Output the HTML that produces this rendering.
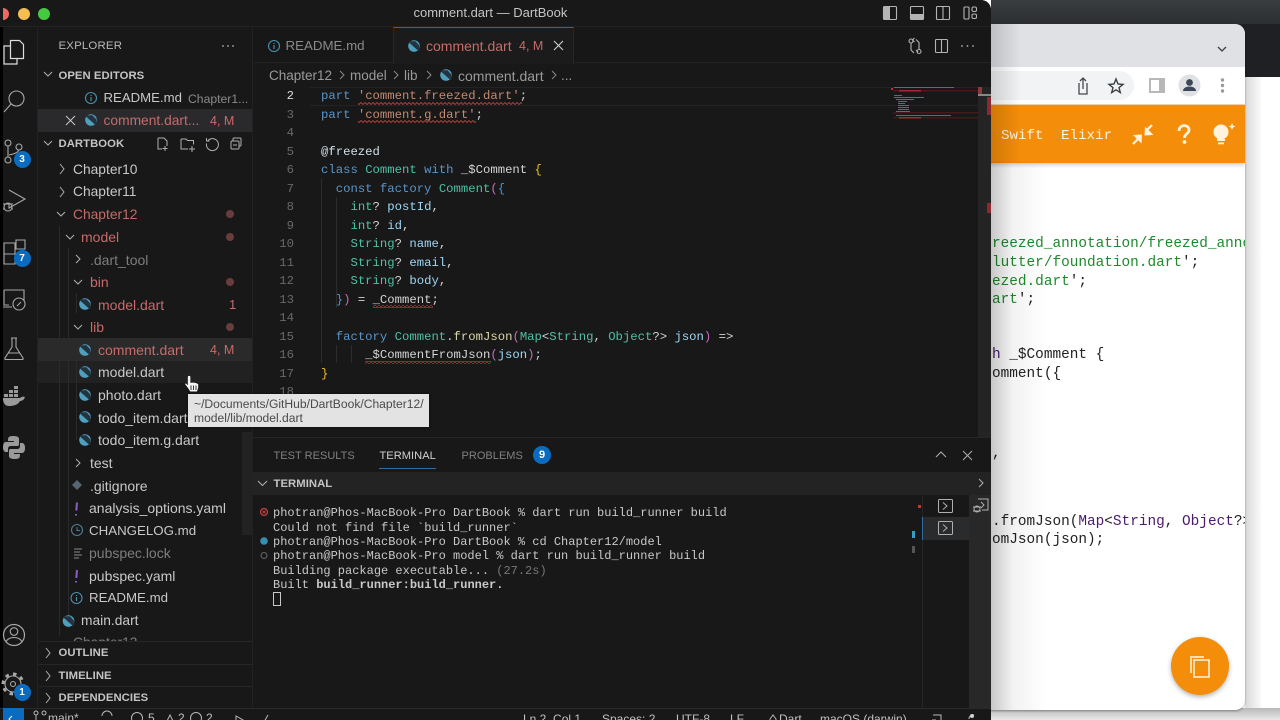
<!DOCTYPE html>
<html><head><meta charset="utf-8"><style>
html,body{margin:0;padding:0;width:1280px;height:720px;overflow:hidden;background:#fff}
div,span.a{position:absolute}
#r{position:relative;width:1280px;height:720px;overflow:hidden;font-family:"Liberation Sans",sans-serif}
.t{position:absolute;white-space:nowrap;line-height:20px;height:20px;font-size:14px;color:#c8c8c8;margin-top:1px}
.d{color:#c76a6a}.g{color:#7d7d7d}
.h{font-weight:bold;font-size:11.3px;color:#c4c4c4;letter-spacing:.05px}
.c{position:absolute;left:321px;white-space:pre;font:12.27px/18px "Liberation Mono",monospace;color:#d4d4d4;height:18px;margin-top:.5px}
.n{position:absolute;width:40px;left:254px;text-align:right;font:12.27px/18px "Liberation Mono",monospace;color:#686868;margin-top:.5px}
.k{color:#5a94c8}.y{color:#4ec0a4}.s{color:#c48a72}.v{color:#9fd6f5}.f{color:#d8d8a8}.b{color:#e8c020}.p{color:#c66cc0}.l{color:#3f97e0}
.u{position:absolute;left:273px;white-space:pre;font:12px/14px "Liberation Mono",monospace;color:#c8c8c8;margin-top:1px}
.w{position:absolute;left:992px;white-space:pre;font:14.4px/18px "Liberation Mono",monospace;color:#222;margin-top:2px}
.gr{color:#1f8a2d}.pu{color:#4b1a6d}
svg{position:absolute;overflow:visible}
.ic{fill:none;stroke:#a8a8a8;stroke-width:1.1}
.ib{position:absolute;width:17px;height:17px;border-radius:50%;background:#0a6cc0;color:#fff;font:bold 10px/17px "Liberation Sans",sans-serif;text-align:center}
.dot{position:absolute;width:8px;height:8px;border-radius:50%;background:#6a3d3d;left:226px}
</style></head><body><div id="r">

<!-- right backdrop -->
<div style="left:991px;top:0;width:289px;height:24px;background:linear-gradient(#3a3d40,#2c2e31)"></div>
<div style="left:991px;top:24px;width:289px;height:53px;background:#1e2023"></div>
<div style="left:1245px;top:77px;width:35px;height:643px;background:linear-gradient(90deg,#d8d8d8,#fff 18px)"></div>
<div style="left:991px;top:708px;width:289px;height:12px;background:linear-gradient(#b8b8b8,#e8e8e8)"></div>

<!-- browser -->
<div style="left:940px;top:24px;width:305px;height:686px;border-radius:10px;background:#fff;overflow:hidden;box-shadow:0 1px 2px rgba(0,0,0,.35)">
 <div style="left:0;top:0;width:305px;height:43px;background:#dfe1e5"></div>
 <div style="left:0;top:43px;width:194px;height:37px;background:#fff"></div>
 <div style="left:0;top:47px;width:194px;height:29px;background:#f1f3f4;border-radius:0 15px 15px 0"></div>
 <div style="left:0;top:80px;width:305px;height:2px;background:#f6d6a8"></div>
 <div style="left:0;top:81px;width:305px;height:58px;background:#f48d0a;box-shadow:0 2px 4px rgba(0,0,0,.2)"></div>
 <div style="left:61px;top:102px;font:14.2px/20px 'Liberation Mono',monospace;color:#fff3dd;white-space:nowrap">Swift</div>
 <div style="left:121px;top:102px;font:14.2px/20px 'Liberation Mono',monospace;color:#fff3dd;white-space:nowrap">Elixir</div>
</div>
<svg style="left:0;top:0" width="1280" height="720">
 <path d="M1218 47l4 4 4-4" fill="none" stroke="#3c4043" stroke-width="1.3"/>
 <path d="M1079 83v11h8V83M1083 89V79M1080 81l3-3 3 3" fill="none" stroke="#45484c" stroke-width="1.3"/>
 <path d="M1116 79l2 5 5 .4-4 3.2 1.3 5-4.3-2.8-4.3 2.8 1.3-5-4-3.2 5-.4z" fill="none" stroke="#3c4043" stroke-width="1.4"/>
 <rect x="1150" y="79" width="14" height="13" fill="#fff" stroke="#b8b8b8" stroke-width="2"/><rect x="1159" y="79" width="5" height="13" fill="#b8b8b8"/>
 <circle cx="1189.5" cy="85.5" r="11" fill="#dfe1e5"/><circle cx="1189.5" cy="82.5" r="3.4" fill="#3c4858"/><path d="M1183 91c0-6 13-6 13 0z" fill="#3c4858"/>
 <g fill="#9a9a9a"><circle cx="1222.5" cy="80" r="1.7"/><circle cx="1222.5" cy="85.5" r="1.7"/><circle cx="1222.5" cy="91" r="1.7"/></g>
 <g stroke="#fff3dd" stroke-width="2.2" fill="none"><path d="M1133 144l6-6M1152 125l-6 6"/></g>
 <path d="M1142 134.500l-9 .5 8.500 8.500zM1144.500 135.500l.5-9 8.500 8.500z" fill="#fff3dd"/>
 <path d="M1179 131c0-7 10-7 10-1 0 4-4.500 3.500-4.500 8" fill="none" stroke="#fff3dd" stroke-width="2.8"/><circle cx="1184.5" cy="142" r="1.9" fill="#fff3dd"/>
 <circle cx="1221" cy="132" r="7.5" fill="#fff3dd"/><rect x="1217" y="139" width="8" height="2" fill="#fff3dd"/><rect x="1218" y="142.5" width="6" height="1.8" fill="#fff3dd"/>
 <path d="M1232 123l1 2.5 2.5 1-2.500 1-1 2.500-1-2.500-2.500-1 2.500-1z" fill="#fff3dd"/>
</svg>
<!-- browser code -->
<div style="left:991px;top:165px;width:254px;height:400px;overflow:hidden">
 <div class="w gr" style="left:1px;top:68px">reezed_annotation/freezed_annotation</div>
 <div class="w" style="left:1px;top:87px"><span class="gr">lutter/foundation.dart</span>';</div>
 <div class="w" style="left:1px;top:106px"><span class="gr">ezed.dart</span>';</div>
 <div class="w" style="left:1px;top:124px"><span class="gr">art</span>';</div>
 <div class="w" style="left:1px;top:179px"><span class="pu">h</span> _$Comment {</div>
 <div class="w" style="left:1px;top:198px">omment({</div>
 <div class="w" style="left:1px;top:278px">,</div>
 <div class="w" style="left:1px;top:346px">.fromJson(<span class="pu">Map</span>&lt;<span class="pu">String</span>, <span class="pu">Object</span>?&gt;</div>
 <div class="w" style="left:1px;top:364px">omJson(json);</div>
</div>
<div style="left:991px;top:162px;width:60px;height:548px;background:linear-gradient(90deg,rgba(0,0,0,.22),rgba(0,0,0,.05) 22px,rgba(0,0,0,0) 55px)"></div>
<div style="left:991px;top:24px;width:30px;height:138px;background:linear-gradient(90deg,rgba(0,0,0,.15),rgba(0,0,0,0))"></div>
<div style="left:1171px;top:637px;width:58px;height:58px;border-radius:50%;background:#f48d0a;box-shadow:0 2px 5px rgba(0,0,0,.3)"></div>
<svg style="left:0;top:0" width="1280" height="720"><g fill="none" stroke="#ffe9c4" stroke-width="1.7"><rect x="1194" y="660" width="15" height="17"/><path d="M1191 673v-16h13"/></g></svg>

<!-- VS Code window -->
<div style="left:0;top:0;width:991px;height:720px;background:#181818;border-radius:0 10px 0 0;overflow:hidden">
 <div style="left:0;top:0;width:3px;height:720px;background:#000"></div>
 <div style="left:0;top:0;width:991px;height:27px;background:#181818;border-bottom:1px solid #222;box-sizing:border-box"></div>
 <div style="left:37px;top:27px;width:1px;height:681px;background:#222"></div>
 <div style="left:252px;top:27px;width:1px;height:681px;background:#222"></div>
 <div style="left:253px;top:27px;width:738px;height:36px;background:#171717;border-bottom:1px solid #222;box-sizing:border-box"></div>
 <div style="left:393px;top:27px;width:181px;height:37px;background:#1b1b1b;border-top:1px solid #1f6aa8;border-left:1px solid #262626;border-right:1px solid #262626;box-sizing:border-box"></div>
 <!-- editor current line -->
 <div style="left:310px;top:87px;width:668px;height:17px;border-top:1px solid #232323;border-bottom:1px solid #232323"></div>
 <!-- minimap -->
 <svg style="left:0;top:0" width="991" height="440">
  <rect x="891" y="88" width="2" height="2" fill="#c03030"/>
  <g fill="#4a161c"><rect x="893" y="90" width="85" height="1.500"/><rect x="893" y="112" width="85" height="1.500"/><rect x="893" y="117" width="85" height="1.500"/></g>
  <g fill="#a82832"><rect x="899" y="90" width="22" height="1.500"/><rect x="899" y="117" width="22" height="1.500"/></g>
  <g fill="#56706f"><rect x="894" y="87" width="60" height="1"/><rect x="894" y="95" width="8" height="1"/><rect x="894" y="97" width="30" height="1"/><rect x="896" y="99" width="18" height="1"/><rect x="898" y="101" width="9" height="1"/><rect x="898" y="103" width="7" height="1"/><rect x="898" y="105" width="11" height="1"/><rect x="898" y="107" width="11" height="1"/><rect x="898" y="109" width="11" height="1"/><rect x="896" y="111" width="14" height="1"/><rect x="896" y="115" width="55" height="1"/></g>
  <rect x="978" y="87" width="13" height="350" fill="#242424"/>
  <rect x="978" y="87" width="4" height="7" fill="#8a3a3f"/>
  <rect x="978" y="94" width="13" height="2" fill="#888"/>
  <rect x="987" y="97" width="4" height="18" fill="#8a2a30"/>
  <rect x="987" y="203" width="4" height="10" fill="#8a2a30"/>
 </svg>
 <!-- panel -->
 <div style="left:253px;top:437px;width:738px;height:1px;background:#262626"></div>
 <div style="left:253px;top:472px;width:738px;height:23px;background:#232323"></div>
 <div style="left:969px;top:495px;width:22px;height:213px;background:#282828"></div>
 <div style="left:922px;top:495px;width:1px;height:213px;background:#262626"></div>
 <div style="left:923px;top:517px;width:46px;height:23px;background:#2a2b2d"></div>
 <div style="left:922px;top:517px;width:1px;height:23px;background:#2f6ea5"></div>
 <div style="left:379px;top:468px;width:57px;height:1px;background:#2a6ea8"></div>
 <div style="left:912px;top:531px;width:3px;height:7px;background:#3a9bc4"></div>
 <div style="left:912px;top:546px;width:3px;height:7px;background:#555"></div>
 <div style="left:918px;top:505px;width:3px;height:3px;background:#c03a3a"></div>
 <!-- sidebar highlights -->
 <div style="left:38px;top:109px;width:214px;height:23px;background:#2a2a2c"></div>
 <div style="left:38px;top:338px;width:214px;height:23px;background:#2a2a2b"></div>
 <div style="left:38px;top:361px;width:214px;height:22px;background:#212121"></div>
 <div style="left:242px;top:432px;width:10px;height:103px;background:#222"></div>
 <div style="left:38px;top:641px;width:214px;height:1px;background:#262626"></div>
 <div style="left:38px;top:664px;width:214px;height:1px;background:#262626"></div>
 <div style="left:38px;top:686px;width:214px;height:1px;background:#262626"></div>
 <!-- status bar -->
 <div style="left:0;top:708px;width:991px;height:12px;background:#181818;border-top:1px solid #2a2a2a;box-sizing:border-box"></div>
 <div style="left:3px;top:708px;width:21px;height:12px;background:#0a6cc0"></div>
 <div class="t" style="left:48px;top:707px;font-size:12px;color:#c0c0c0">main*</div>
 <div class="t" style="left:148px;top:707px;font-size:12px;color:#c0c0c0">5</div>
 <div class="t" style="left:178px;top:707px;font-size:12px;color:#c0c0c0">2</div>
 <div class="t" style="left:206px;top:707px;font-size:12px;color:#c0c0c0">2</div>
 <div class="t" style="left:523px;top:708px;font-size:12px;color:#c0c0c0">Ln 2, Col 1</div>
 <div class="t" style="left:602px;top:708px;font-size:12px;color:#c0c0c0">Spaces: 2</div>
 <div class="t" style="left:676px;top:708px;font-size:12px;color:#c0c0c0">UTF-8</div>
 <div class="t" style="left:730px;top:708px;font-size:12px;color:#c0c0c0">LF</div>
 <div class="t" style="left:779px;top:708px;font-size:12px;color:#c0c0c0">Dart</div>
 <div class="t" style="left:820px;top:708px;font-size:12px;color:#c0c0c0">macOS (darwin)</div>
</div>
<div style="left:3px;top:3px;width:6px;height:22px;overflow:hidden"><div style="left:-6px;top:5px;width:12px;height:12px;border-radius:50%;background:#ec6a5e"></div></div>
<div style="left:17.5px;top:8px;width:12px;height:12px;border-radius:50%;background:#f4bf4f"></div>
<div style="left:38px;top:8px;width:12px;height:12px;border-radius:50%;background:#45c93f"></div>

<div class="t" style="left:413.500px;top:2px;font-size:13px;color:#c4c4c4">comment.dart — DartBook</div>

<svg width="0" height="0"><defs><g id="da"><circle cx="6" cy="6" r="5.8" fill="#4f9fbf"/><path d="M1.500 1.200h6l3.800 4.300v5.500h-.8L1.500 3z" fill="#23343f"/></g></defs></svg>

<!-- Title bar layout icons -->
<svg style="left:0;top:0" width="991" height="64">
 <g fill="none" stroke="#b4b4b4" stroke-width="1.1">
  <rect x="883.5" y="6.5" width="13" height="13" rx="1"/><rect x="910.5" y="6.5" width="13" height="13" rx="1"/><rect x="936.5" y="6.5" width="13" height="13" rx="1"/><path d="M943 6.500v13"/>
  <rect x="964" y="7" width="5" height="12" rx="1"/><rect x="972" y="7" width="4.5" height="4.5" rx="1.5"/><rect x="972" y="14" width="4.5" height="4.5" rx="1.5"/>
  <rect x="935.5" y="39.5" width="12" height="13" rx="1"/><path d="M941.500 39.500v13"/>
  <circle cx="911" cy="41" r="2"/><circle cx="919" cy="51.5" r="2"/><path d="M911 43v7l3 3M919 49.500v-7l-3-3M914.500 38l-2 2 2 2M916 50l2 2"/>
  <path d="M554 41l9 9M563 41l-9 9" stroke="#d0d0d0"/>
 </g>
 <rect x="884" y="7" width="6" height="12" fill="#b4b4b4"/><rect x="911" y="14" width="12" height="5.5" fill="#b4b4b4"/>
 <g fill="#b0b0b0"><circle cx="962" cy="46" r=".9"/><circle cx="967.5" cy="46" r=".9"/><circle cx="973" cy="46" r=".9"/><circle cx="223" cy="46" r=".9"/><circle cx="228" cy="46" r=".9"/><circle cx="233" cy="46" r=".9"/></g>
</svg>

<!-- tabs -->
<svg style="left:268px;top:40px" width="12" height="12"><circle cx="6" cy="6" r="5.5" fill="none" stroke="#4a8fae" stroke-width="1.1"/><path d="M6 5v4M6 3v1" stroke="#4a8fae" stroke-width="1.2"/></svg>
<div class="t" style="left:285.5px;top:35px;color:#8a8a8a;font-size:13.300px">README.md</div>
<svg style="left:408px;top:40px" width="12" height="12"><use href="#da"/></svg>
<div class="t d" style="left:426px;top:35px">comment.dart</div>
<div class="t d" style="left:519px;top:35px;font-size:12.5px">4, M</div>

<!-- breadcrumb -->
<div class="t" style="left:269px;top:64.5px;color:#9a9a9a;font-size:13.500px">Chapter12</div>
<div class="t" style="left:350px;top:64.5px;color:#9a9a9a;font-size:13.500px">model</div>
<div class="t" style="left:404px;top:64.5px;color:#9a9a9a;font-size:13.500px">lib</div>
<svg style="left:440px;top:69px" width="12" height="12"><use href="#da"/></svg>
<div class="t" style="left:458px;top:64.5px;color:#9a9a9a">comment.dart</div>
<div class="t" style="left:561px;top:64.5px;color:#9a9a9a;font-size:13.500px">...</div>
<svg style="left:0;top:0" width="600" height="90"><g fill="none" stroke="#8a8a8a" stroke-width="1"><path d="M340 71l4 4-4 4M394 71l4 4-4 4M427 71l4 4-4 4M552 71l4 4-4 4"/></g></svg>

<!-- line numbers -->
<div class="n" style="top:86px;color:#dcdcdc">2</div><div class="n" style="top:105px">3</div><div class="n" style="top:123px">4</div><div class="n" style="top:142px">5</div><div class="n" style="top:160px">6</div><div class="n" style="top:179px">7</div><div class="n" style="top:197px">8</div><div class="n" style="top:216px">9</div><div class="n" style="top:234px">10</div><div class="n" style="top:253px">11</div><div class="n" style="top:271px">12</div><div class="n" style="top:290px">13</div><div class="n" style="top:308px">14</div><div class="n" style="top:327px">15</div><div class="n" style="top:345px">16</div><div class="n" style="top:364px">17</div><div class="n" style="top:382px">18</div>

<!-- code -->
<div class="c" style="top:86px"><span class="k">part</span> <span class="s">'comment.freezed.dart'</span>;</div>
<div class="c" style="top:105px"><span class="k">part</span> <span class="s">'comment.g.dart'</span>;</div>
<div class="c" style="top:142px"><span style="color:#cfe0e8">@freezed</span></div>
<div class="c" style="top:160px"><span class="k">class</span> <span class="y">Comment</span> <span class="k">with</span> _$Comment <span class="b">{</span></div>
<div class="c" style="top:179px">  <span class="k">const factory</span> <span class="y">Comment</span><span class="p">(</span><span class="l">{</span></div>
<div class="c" style="top:197px">    <span class="y">int</span>? <span class="v">postId</span>,</div>
<div class="c" style="top:216px">    <span class="y">int</span>? <span class="v">id</span>,</div>
<div class="c" style="top:234px">    <span class="y">String</span>? <span class="v">name</span>,</div>
<div class="c" style="top:253px">    <span class="y">String</span>? <span class="v">email</span>,</div>
<div class="c" style="top:271px">    <span class="y">String</span>? <span class="v">body</span>,</div>
<div class="c" style="top:290px">  <span class="l">}</span><span class="p">)</span> = _Comment;</div>
<div class="c" style="top:327px">  <span class="k">factory</span> <span class="y">Comment</span>.<span class="f">fromJson</span><span class="p">(</span><span class="y">Map</span>&lt;<span class="y">String</span>, <span class="y">Object</span>?&gt; <span class="v">json</span><span class="p">)</span> =&gt;</div>
<div class="c" style="top:345px">      <span style="color:#d4d4d4">_$CommentFromJson</span><span class="p">(</span><span class="v">json</span><span class="p">)</span>;</div>
<div class="c b" style="top:364px">}</div>

<svg style="left:0;top:0" width="991" height="440">
 <defs><pattern id="sq" width="4" height="3" patternUnits="userSpaceOnUse"><path d="M0 1.500L1 .5 3 2.500 4 1.500" fill="none" stroke="#b84040" stroke-width=".9"/></pattern></defs>
 <rect x="358" y="102" width="164" height="3" fill="url(#sq)"/>
 <rect x="358" y="120" width="118" height="3" fill="url(#sq)"/>
 <rect x="373" y="305" width="60" height="3" fill="url(#sq)"/>
 <rect x="365" y="361" width="126" height="3" fill="url(#sq)"/>
 <g stroke="#2c2c2c" stroke-width="1"><path d="M321.500 178v185M336.500 197v111M336.500 345v18M351.500 345v18"/></g>
</svg>

<!-- sidebar -->
<div class="t" style="left:58.5px;top:35px;font-size:11.4px;color:#b8b8b8;letter-spacing:.2px">EXPLORER</div>
<div class="t h" style="left:58.5px;top:64.500px">OPEN EDITORS</div>
<svg style="left:85px;top:92px" width="12" height="12"><circle cx="6" cy="6" r="5.5" fill="none" stroke="#4a8fae" stroke-width="1.1"/><path d="M6 5v4M6 3v1" stroke="#4a8fae" stroke-width="1.2"/></svg>
<div class="t" style="left:103.5px;top:87px;font-size:13.2px">README.md</div>
<div class="t" style="left:188px;top:87.5px;font-size:12.2px;color:#8a8a8a">Chapter1...</div>
<svg style="left:85px;top:114px" width="12" height="12"><use href="#da"/></svg>
<div class="t d" style="left:103.5px;top:110px;font-size:13.800px">comment.dart...</div>
<div class="t d" style="left:210px;top:110px;font-size:12.5px">4, M</div>
<div class="t h" style="left:58.5px;top:133px">DARTBOOK</div>

<div class="t" style="left:73px;top:158.500px;font-size:13.800px">Chapter10</div>
<div class="t" style="left:73px;top:181px;font-size:13.800px">Chapter11</div>
<div class="t d" style="left:73px;top:203.500px;font-size:13.800px">Chapter12</div>
<div class="t d" style="left:81px;top:226px">model</div>
<div class="t g" style="left:90px;top:248.500px">.dart_tool</div>
<div class="t d" style="left:90px;top:271px">bin</div>
<div class="t d" style="left:98px;top:293.500px">model.dart</div>
<div class="t d" style="left:229px;top:293.500px;font-size:13px">1</div>
<div class="t d" style="left:90px;top:316px">lib</div>
<div class="t d" style="left:98px;top:339px">comment.dart</div>
<div class="t d" style="left:210px;top:339px;font-size:12.5px">4, M</div>
<div class="t" style="left:98px;top:361px">model.dart</div>
<div class="t" style="left:98px;top:384px">photo.dart</div>
<div class="t" style="left:98px;top:406.500px">todo_item.dart</div>
<div class="t" style="left:98px;top:429px">todo_item.g.dart</div>
<div class="t" style="left:90px;top:452px">test</div>
<div class="t" style="left:90px;top:474.500px">.gitignore</div>
<div class="t" style="left:89px;top:497px">analysis_options.yaml</div>
<div class="t" style="left:89px;top:519.500px;font-size:13.300px">CHANGELOG.md</div>
<div class="t g" style="left:89px;top:542px">pubspec.lock</div>
<div class="t" style="left:89px;top:564.500px">pubspec.yaml</div>
<div class="t" style="left:89px;top:587px;font-size:13.300px">README.md</div>
<div class="t" style="left:81px;top:610px;font-size:13.800px">main.dart</div>
<div style="left:73px;top:637px;width:70px;height:4px;overflow:hidden"><div class="t g" style="left:0;top:-5px;font-size:13.800px">Chapter13</div></div>
<div class="t h" style="left:58.5px;top:642px">OUTLINE</div>
<div class="t h" style="left:58.5px;top:665px">TIMELINE</div>
<div class="t h" style="left:58.5px;top:687px">DEPENDENCIES</div>

<div class="dot" style="top:210px"></div><div class="dot" style="top:233px"></div><div class="dot" style="top:278px"></div><div class="dot" style="top:323px"></div>

<svg style="left:0;top:0" width="252" height="720">
 <g fill="none" stroke="#b0b0b0" stroke-width="1">
  <path d="M44 72l4 4 4-4M44 141l4 4 4-4"/>
  <path d="M60 164l4 5-4 5M60 187l4 5-4 5M57 212l4 4 4-4M66 235l4 4 4-4M76 255l4 4-4 4M74 280l4 4 4-4M74 325l4 4 4-4M76 459l4 4-4 4M46 648l4 5-4 5M46 671l4 5-4 5M46 693l4 5-4 5"/>
  <path d="M66 116l9 9M75 116l-9 9" stroke="#c8c8c8"/>
  <path d="M158 138h6l3 3v5M158 138v11h4M165 146v5M162.500 148.500h5"/>
  <path d="M181 139h5l1.500 1.500h6v4M181 139v10h7M192 146v6M189 149h6"/>
  <path d="M208 140.500a6 6 0 1 1-1.500 3M206.500 138v3h3"/>
  <rect x="233" y="138" width="8" height="8" rx="1"/><rect x="231" y="141" width="8" height="8" rx="1" fill="#181818"/><path d="M233 145h4"/>
 </g>
 <g stroke="#2a2a2a"><path d="M59.500 226v410M68.500 248v380M76.500 293v20M76.500 338v102"/></g>
 <use href="#da" x="79" y="298"/><use href="#da" x="79" y="344"/><use href="#da" x="79" y="366"/><use href="#da" x="79" y="389"/><use href="#da" x="79" y="411"/><use href="#da" x="79" y="434"/><use href="#da" x="62.500" y="615"/>
 <path d="M72 485l5-5 5 5-5 5z" fill="#54666f"/>
 <circle cx="77" cy="530" r="5.5" fill="none" stroke="#4a7f8f" stroke-width="1.1"/><path d="M77 527v3.500h3" fill="none" stroke="#4a7f8f"/>
 <circle cx="76.5" cy="598" r="5.5" fill="none" stroke="#4a8fae" stroke-width="1.1"/><path d="M76.500 597v4M76.500 595v1" stroke="#4a8fae" stroke-width="1.2"/>
 <path d="M74 549h8M74 552h6M74 555h8M74 558h5" stroke="#8a8a8a" stroke-width="1"/>
 <path d="M77 502.500l-.7 8M76 514v1.500M77 570l-.7 8M76 581v1.500" stroke="#8a5fc0" stroke-width="2"/>

 <!-- activity bar -->
 <g class="ic">
  <path d="M10.500 42v-1.500h9l4 4v14h-13zM10.500 46H4v18h13v-5" stroke="#dcdcdc" stroke-width="1.2"/>
  <circle cx="16.5" cy="98.5" r="7.5"/><path d="M11 104l-7 8"/>
  <circle cx="8" cy="143" r="3"/><circle cx="19" cy="147" r="3"/><circle cx="8" cy="160" r="3"/><path d="M8 146v11M9 155c6-1 9-3 10-5"/>
  <path d="M9 190l16 9-16 9v-5"/><circle cx="8" cy="207" r="4"/><path d="M3 204h10M3 209h2M11 209h2"/>
  <path d="M4 243h11v11h-11zM4 254h11v10H4zM15 254h8v-3M16 240h9v9h-9z"/>
  <path d="M4 290h20v11M4 290v15h5M3 307h9"/><circle cx="19" cy="304" r="6"/><path d="M17 306l4-4"/>
  <path d="M11 338h6M12 338v9l-7 11c-.5 1 0 1.500 1 1.500h16c1 0 1.500-.5 1-1.500l-7-11v-9M8 353h12"/>
  <circle cx="14" cy="635" r="10.500" stroke-width="1.2"/><circle cx="14" cy="631.500" r="3.800"/><path d="M6 642c2-6 14-6 16 0"/>
  <circle cx="13" cy="684" r="2.500"/><circle cx="13" cy="684" r="8"/><circle cx="13" cy="684" r="10" stroke-dasharray="3.500 4.300" stroke-width="3"/>
 </g>
 <g fill="#9a9a9a">
  <rect x="4" y="394" width="4" height="3"/><rect x="9" y="394" width="4" height="3"/><rect x="14" y="394" width="4" height="3"/><rect x="9" y="390" width="4" height="3"/><rect x="14" y="390" width="4" height="3"/><rect x="14" y="386" width="4" height="3"/>
  <path d="M3 398h17c1-1 3-2 5-1-1 3-3 4-5 4-2 4-7 5-11 5-4 0-6-3-6-8z"/>
  <path d="M13 436c-5 0-5 2-5 5h6v1H6c-2 0-3 2-3 5s1 5 3 5h2v-3c0-2 1-3 3-3h6c2 0 2-1 2-3v-4c0-2-2-3-6-3z"/>
  <path d="M15 459c5 0 5-2 5-5h-6v-1h8c2 0 3-2 3-5s-1-5-3-5h-2v3c0 2-1 3-3 3h-6c-2 0-2 1-2 3v4c0 2 2 3 6 3z"/>
 </g>
</svg>
<div class="ib" style="left:13.5px;top:151px">3</div>
<div class="ib" style="left:13.5px;top:249.5px">7</div>
<div class="ib" style="left:13.5px;top:683.5px">1</div>

<!-- panel -->
<div class="t" style="left:273.5px;top:444.500px;font-size:11px;color:#808080;letter-spacing:.03px">TEST RESULTS</div>
<div class="t" style="left:379.5px;top:444.500px;font-size:11.100px;color:#d0d0d0;letter-spacing:.03px">TERMINAL</div>
<div class="t" style="left:461.5px;top:444.500px;font-size:11px;color:#808080;letter-spacing:.03px">PROBLEMS</div>
<div class="ib" style="left:533px;top:446px;width:18px;height:18px;line-height:18px;font-size:11px">9</div>
<div class="t h" style="left:273.5px;top:473px">TERMINAL</div>

<div class="u" style="top:505px">photran@Phos-MacBook-Pro DartBook % dart run build_runner build</div>
<div class="u" style="top:519.5px">Could not find file `build_runner`</div>
<div class="u" style="top:534px">photran@Phos-MacBook-Pro DartBook % cd Chapter12/model</div>
<div class="u" style="top:548px">photran@Phos-MacBook-Pro model % dart run build_runner build</div>
<div class="u" style="top:562.500px">Building package executable... <span style="color:#777">(27.2s)</span></div>
<div class="u" style="top:577px">Built <b>build_runner:build_runner.</b></div>
<div style="left:273px;top:592px;width:6px;height:12px;border:1px solid #c8c8c8"></div>

<svg style="left:0;top:0" width="991" height="720">
 <g fill="none" stroke="#b0b0b0" stroke-width="1">
  <path d="M258 481l4.500 4.500 4.500-4.500"/>
  <path d="M936 457l5-5 5 5M963 451l9 9M972 451l-9 9"/>
  <path d="M979 479l4 4-4 4"/>
  <rect x="938.5" y="499.5" width="14" height="13" rx="1"/><path d="M943 502.500l4 3.500-4 3.500"/>
  <rect x="938.5" y="521.5" width="14" height="13" rx="1"/><path d="M943 524.500l4 3.500-4 3.500"/>
  <path d="M978 499h10v11h-6M981 502l3 3-3 3"/><circle cx="977" cy="509" r="3"/><path d="M973 507h8M973 511h8"/>
 </g>
 <circle cx="264" cy="512" r="3.5" fill="none" stroke="#c04040" stroke-width="1.3"/><path d="M262.500 510.500l3 3M265.500 510.500l-3 3" stroke="#c04040"/>
 <circle cx="264" cy="541" r="3.8" fill="#3590b0"/>
 <circle cx="264" cy="555.5" r="3" fill="none" stroke="#666" stroke-width="1"/>
 <g fill="none" stroke="#b8b8b8" stroke-width="1">
  <path d="M12 716l-3 3 3 3" stroke="#fff"/>
  <circle cx="36" cy="713" r="2"/><circle cx="44" cy="713" r="2"/><path d="M36 715v6"/>
  <path d="M102 716a5 5 0 0 1 10 0"/>
  <circle cx="137" cy="718" r="5.5"/><path d="M166 723l4-8 4 8"/><circle cx="196" cy="718" r="5.5"/>
  <path d="M236 716v8l7-4z"/><path d="M264 722l4-7"/><path d="M770 722v-3l3-4 3 4v3"/>
  <path d="M933 715h8v5M932 720h4"/><path d="M969 719a4 4 0 0 1 5-4"/>
 </g>
 <circle cx="972" cy="716" r="2" fill="#d0d0d0"/>
</svg>

<!-- tooltip -->
<div style="left:188px;top:394px;width:241px;height:33px;background:#e3e3e3;box-shadow:0 0 2px rgba(0,0,0,.6)"></div>
<div class="t" style="left:194px;top:393px;font-size:12.100px;color:#4a4a4a">~/Documents/GitHub/DartBook/Chapter12/</div>
<div class="t" style="left:194px;top:407px;font-size:12.100px;color:#4a4a4a">model/lib/model.dart</div>

<!-- cursor -->
<svg style="left:184px;top:375px" width="15" height="17"><path d="M3.500 2c0-2 3.200-2 3.200 0v5.500l2-.3 2 .3 2 .5 1.800 1v4l-1.300 3.800H6l-2.500-4-2.500-3.300c-.5-1 .8-2 1.500-1l1 1z" fill="#f4f4f4" stroke="#111" stroke-width=".6"/><path d="M7 10.500v4.500M9.500 10.500v4.500M12 10.500v4.500" stroke="#222" stroke-width=".9"/></svg>

</div></body></html>
